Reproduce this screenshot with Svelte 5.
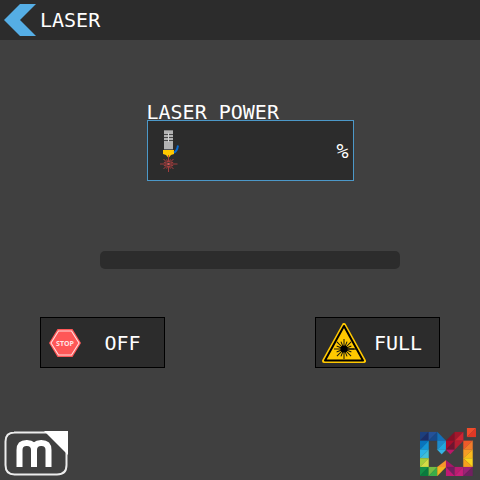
<script>
  let power = $state('');
  const level = $derived(Number(power) || 0);

  const rays = Array.from({ length: 16 }, (_, i) => i * 22.5);

  const facets = [
    ['24,27 50,27 24,53', '#1d3f7d'],
    ['50,27 50,53 24,53', '#1b2d68'],
    ['50,27 76,27 50,53', '#24529a'],
    ['76,27 76,53 50,53', '#17498c'],
    ['24,53 50,53 24,80', '#0873bd'],
    ['50,53 50,80 24,80', '#1595d6'],
    ['24,80 50,80 24,106', '#2bb4e8'],
    ['50,80 50,106 24,106', '#42c0d8'],
    ['24,106 50,106 24,132', '#a7ce3b'],
    ['50,106 50,132 24,132', '#d3dc45'],
    ['24,132 50,132 24,159', '#138f47'],
    ['50,132 50,159 24,159', '#087c3d'],
    ['50,132 76,132 50,159', '#76bd43'],
    ['76,132 76,159 50,159', '#39ad49'],
    ['76,132 102,132 76,159', '#f4b51f'],
    ['76,132 102,112 102,132', '#f7952b'],
    ['76,27 102,53 76,53', '#126fb7'],
    ['76,53 102,53 76,80', '#1c8bcc'],
    ['102,53 102,80 76,80', '#20a8df'],
    ['76,80 102,80 89,94', '#35b5e6'],
    ['102,53 128,27 128,53', '#851027'],
    ['102,53 128,53 102,80', '#a80e2b'],
    ['128,53 128,80 102,80', '#6f1530'],
    ['102,80 128,80 115,94', '#bd1769'],
    ['128,27 154,27 128,53', '#a3172c'],
    ['154,27 154,53 128,53', '#cf2534'],
    ['128,53 154,53 128,80', '#b41e32'],
    ['154,53 182,53 154,80', '#ee5a29'],
    ['182,53 182,80 154,80', '#f27c2a'],
    ['154,80 182,80 154,106', '#f79b26'],
    ['182,80 182,106 154,106', '#fbb91d'],
    ['154,106 182,106 182,132', '#fbd41d'],
    ['154,106 182,132 154,132', '#f6a11d'],
    ['102,112 128,132 102,132', '#a81769'],
    ['102,132 128,132 128,159', '#72205f'],
    ['102,132 128,159 102,159', '#c21875'],
    ['128,132 154,132 128,159', '#bc1c70'],
    ['154,132 154,159 128,159', '#c81f7a'],
    ['154,132 182,132 154,159', '#9c2275'],
    ['182,132 182,159 154,159', '#722060'],
    ['165,15 192,15 165,42', '#f04c2b'],
    ['192,15 192,42 165,42', '#df3825']
  ];
</script>

<div class="screen">
  <header>
    <button class="back" aria-label="Back">
      <svg viewBox="0 0 32 32" width="32" height="32">
        <path d="M16 0H32L16 16L32 32H16L0 16Z" fill="#55aee5" />
      </svg>
    </button>
    <h1>LASER</h1>
  </header>

  <main>
    <div class="panel">
      <div class="power">
        <label for="power">LASER POWER</label>
        <div class="field">
          <svg viewBox="0 0 20 42" width="20" height="42">
            <rect x="4" y="0" width="9" height="19" fill="#b3b3b3" />
            <path d="M4 .5h9" stroke="#858585" />
            <path d="M4 4.5h9M4 7.5h9M4 10.5h9" stroke="#484848" />
            <path d="M8.500 3v9" stroke="#d4d4d4" />
            <path d="M4 19h9v1h-9z" fill="#55565a" />
            <path d="M3 20h11v4l-3 1-2.500 3-2.500-3-3-1z" fill="#ffc800" />
            <path d="M14 22.500q3-1 4-7" fill="none" stroke="#096bd0" stroke-width="2" />
            <g stroke="#b04040" stroke-width=".9">
              {#each rays as angle, i}
                <path d="M8.500 32V{i % 2 ? 29 : i % 4 ? 27 : 25}" transform="rotate({angle} 8.500 34)" />
              {/each}
            </g>
            <circle cx="8.500" cy="34" r="1.300" fill="#d05a5a" />
          </svg>
          <input id="power" type="text" inputmode="numeric" bind:value={power} />
          <span>%</span>
        </div>
      </div>

      <progress aria-label="Laser power" max="100" value={level}></progress>
    </div>

    <div class="actions">
      <button class="action" onclick={() => (power = '')}>
        <svg viewBox="0 0 32 28" width="32" height="28">
          <path d="M8.500 0H23.500L32 14L23.500 28H8.500L0 14Z" fill="#ff5757" />
          <path d="M9.500 2H22.500L30 14L22.500 26H9.500L2 14Z" fill="none" stroke="#ffdede" stroke-width="1.100" />
          <text x="16" y="16.500" text-anchor="middle">STOP</text>
        </svg>
        <span>OFF</span>
      </button>
      <button class="action full" onclick={() => (power = '100')}>
        <svg viewBox="0 0 44 40" width="44" height="40">
          <path d="M22 2L42 38H2Z" fill="#ffc800" stroke="#ffc800" stroke-width="4" stroke-linejoin="round" />
          <path d="M22 3L41 37.500H3Z" fill="#ffc800" stroke="#000" stroke-width="2" stroke-linejoin="round" />
          <g stroke="#15140c" stroke-width="1">
            {#each rays as angle, i}
              <path d="M22 26V{i % 2 ? 18 : 16}" transform="rotate({angle} 22 26)" />
            {/each}
            <path d="M22 26h13" stroke-width="1.300" />
          </g>
          <circle cx="22" cy="26" r="3.600" fill="#000" />
        </svg>
        <span>FULL</span>
      </button>
    </div>
  </main>

  <footer>
    <svg viewBox="0 0 64 45" width="64" height="45" role="img" aria-label="m">
      <path d="M10 1.500H62.500V34Q62.500 43.500 53 43.500H10.500Q1.500 43.500 1.500 34V10.500Q1.500 1.500 10.500 1.500Z" fill="none" stroke="#ececec" stroke-width="2" />
      <path d="M40 0H64V24Z" fill="#fff" />
      <path d="M15.500 36V19Q15.500 12 22.500 12H23Q30 12 30 19V36M30 19Q30 12 37 12H37.500Q44.500 12 44.500 19V36" fill="none" stroke="#fff" stroke-width="6" />
    </svg>
    <svg viewBox="24 15 168 144" width="56" height="48" role="img" aria-label="Logo">
      {#each facets as [points, color]}
        <polygon {points} fill={color} stroke={color} stroke-width=".5" />
      {/each}
    </svg>
  </footer>
</div>

<style>
  :global(body) {
    margin: 0;
    background: #404040;
  }

  .screen {
    min-height: 100vh;
    display: flex;
    flex-direction: column;
    background: #404040;
    color: #fff;
    font: 20px/24px "DejaVu Sans Mono", monospace;
  }

  button,
  input {
    font: inherit;
    color: inherit;
  }

  svg {
    display: block;
    flex: none;
  }

  header {
    height: 40px;
    display: flex;
    align-items: center;
    gap: 4px;
    padding: 0 4px;
    background: #2c2c2c;
  }

  .back {
    padding: 0;
    border: 0;
    background: none;
  }

  h1 {
    margin: 0;
    font: inherit;
  }

  main {
    flex: 1;
    padding: 60px 40px 0;
  }

  .panel {
    display: flex;
    flex-direction: column;
    align-items: center;
    padding-left: 20px;
  }

  .power {
    width: 54%;
    min-width: 207px;
  }

  .power label {
    display: block;
    height: 20px;
  }

  .field {
    box-sizing: border-box;
    height: 61px;
    display: flex;
    align-items: center;
    padding: 0 4px 0 12px;
    border: 1px solid #4c98c8;
    background: #2c2c2c;
  }

  .field input {
    flex: 1;
    min-width: 0;
    padding: 0;
    border: 0;
    outline: 0;
    background: none;
    text-align: right;
  }

  progress {
    appearance: none;
    width: 79%;
    height: 18px;
    margin: 70px 0 48px;
    border: 0;
    border-radius: 5px;
    overflow: hidden;
    background: #2c2c2c;
  }

  progress::-webkit-progress-bar {
    background: #2c2c2c;
  }

  progress::-webkit-progress-value {
    background: #55aee5;
  }

  .actions {
    display: flex;
    justify-content: space-between;
  }

  .action {
    box-sizing: border-box;
    width: 125px;
    height: 51px;
    display: flex;
    align-items: center;
    gap: 8px;
    padding: 0 8px;
    border: 1px solid #000;
    background: #2c2c2c;
  }

  .action.full {
    padding: 0 6px;
  }

  .action span {
    flex: 1;
    text-align: center;
  }

  .action.full span {
    text-align: left;
  }

  .action text {
    font: 700 7px "Open Sans", sans-serif;
    fill: #ffe4e4;
  }

  footer {
    display: flex;
    justify-content: space-between;
    align-items: flex-end;
    padding: 4px;
  }
</style>
